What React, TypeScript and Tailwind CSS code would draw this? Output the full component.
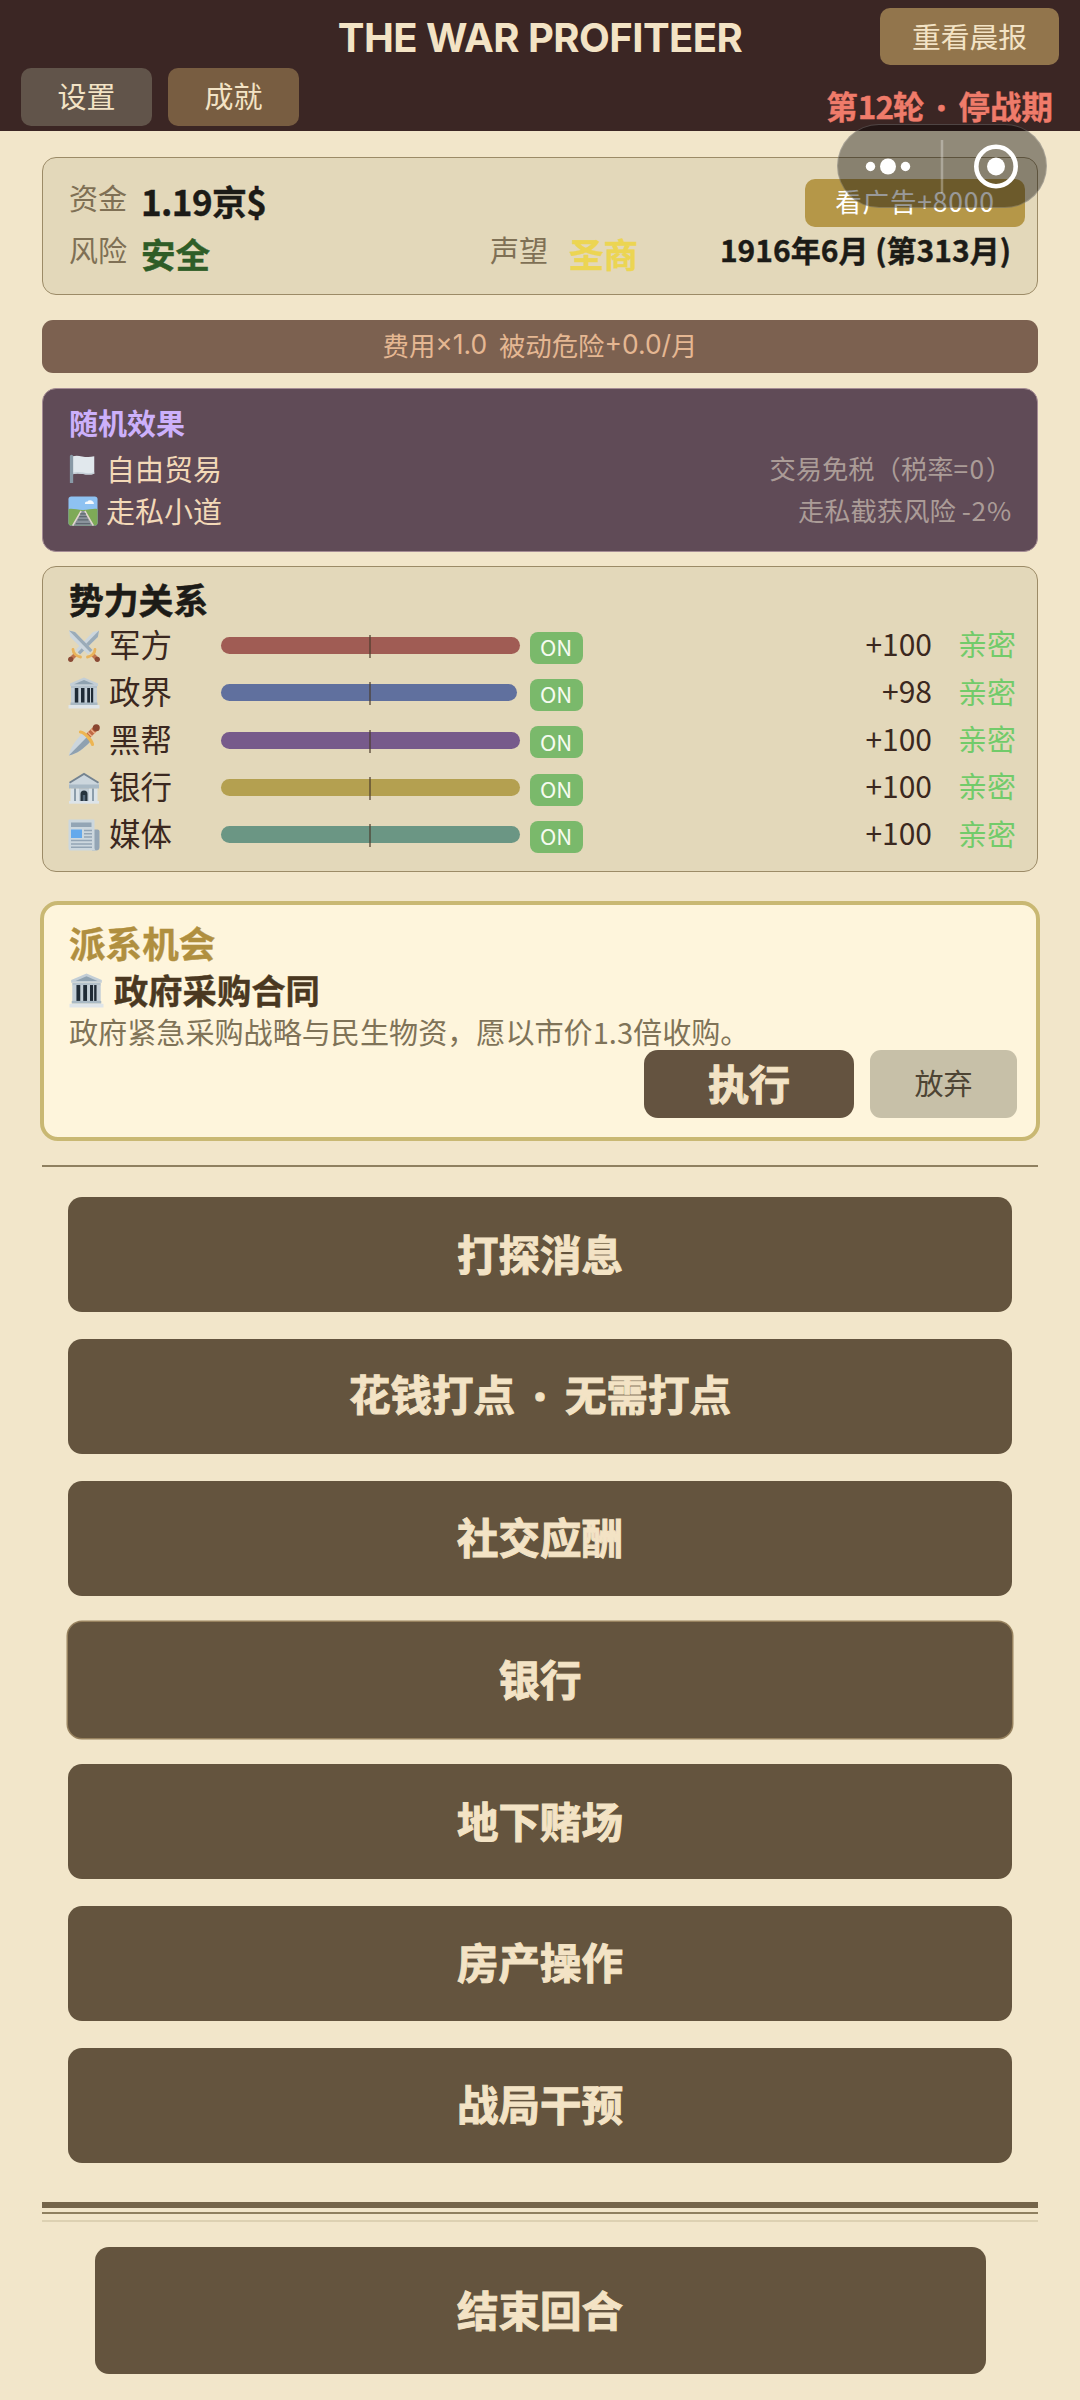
import type { ReactNode } from "react";

const CJK = "font-['Noto_Sans_CJK_SC',sans-serif]";
const HEAVY = "font-bold [-webkit-text-stroke:1px_currentColor]";

function Temple() {
  return (
    <svg viewBox="0 0 32 32" className="h-full w-full">
      <path d="M16 .5 30 6.500v2.500H2V6.500z" fill="#c3ced6" />
      <path d="M16 3 26 7.300H6z" fill="#8fa2b0" />
      <path d="M3 9h26v2.500H3z" fill="#b3c1cb" />
      <path d="M4 11h24v15H4z" fill="#1f2b36" />
      <path d="M3 11h3.800v15H3zM10.300 11h2.700v15h-2.700zM16.500 11h2.700v15h-2.700zM22 11h1v15h-1zM25.200 11H29v15h-3.800z" fill="#c3ced6" />
      <path d="M2.500 25.500h27V28h-27z" fill="#a9b9c4" />
      <path d="M.5 28h31v3.500H.5z" fill="#dfe5e9" />
    </svg>
  );
}

function Bank() {
  return (
    <svg viewBox="0 0 32 32" className="h-full w-full">
      <path d="M16 1 31 10.500v2.500H1v-2.500z" fill="#ccd6dd" />
      <path d="M16 .8 31 10 30 11.500 16 3 2 11.500 1 10z" fill="#75838f" />
      <path d="M1 12.500h30v4H1z" fill="#a9b9c5" />
      <path d="M3 16.500h26V29H3z" fill="#8c9dab" />
      <path d="M2.500 16.500H6V29H2.500zM8 16.500h3V29H8zM21 16.500h3V29h-3zM26 16.500h3.500V29H26z" fill="#dbe3e8" />
      <path d="M11 16.500h10V29H11z" fill="#c0ccd5" />
      <path d="M12.500 29v-7a3.500 3.500 0 0 1 7 0v7z" fill="#26333d" />
      <path d="M14.800 29v-6h2.400v6z" fill="#56697a" />
      <path d="M1 29h30v2.700H1z" fill="#dde4e9" />
    </svg>
  );
}

function Swords() {
  return (
    <svg viewBox="0 0 32 32" className="h-full w-full">
      <path d="M31 .5 29.800 7 12 24.500 7.500 20 25 2z" fill="#ccd6dd" />
      <path d="M31 .5 29.800 7 12 24.500 9.800 22.200z" fill="#9aabb8" />
      <path d="M1 .5 2.200 7 20 24.500l4.500-4.500L7 2z" fill="#ccd6dd" />
      <path d="M1 .5 7 2 24.500 20l-2.300 2.200z" fill="#9aabb8" />
      <path d="M8 24 2.500 29.500M24 24l5.500 5.500" stroke="#c0764f" strokeWidth="4" />
      <path d="M5 19.500c0 3.500 3.500 7 7.500 7.500M27 19.500c0 3.500-3.500 7-7.500 7.500" stroke="#e9b35b" strokeWidth="2.800" fill="none" strokeLinecap="round" />
      <circle cx="2.700" cy="29.300" r="2.600" fill="#8a4a35" />
      <circle cx="29.300" cy="29.300" r="2.600" fill="#8a4a35" />
    </svg>
  );
}

function Dagger() {
  return (
    <svg viewBox="0 0 32 32" className="h-full w-full">
      <path d="M.8 31.500C2 24 7 17 14.500 9.500l8 8C16 24 9 30 .8 31.500z" fill="#ccd6dd" />
      <path d="M.8 31.500 18.500 13.500l4 4C16 24 9 30 .8 31.500z" fill="#8fa1b0" />
      <path d="M19.500 12.500 28 4" stroke="#c06a45" strokeWidth="5.500" />
      <path d="M20 8.500l4 4M23 5.500l4 4" stroke="#eeb18a" strokeWidth="1.200" />
      <path d="M12.500 8c4 .5 11 7.500 12 12.500" stroke="#edb552" strokeWidth="3.200" fill="none" strokeLinecap="round" />
      <circle cx="28.300" cy="3.800" r="3.500" fill="#8a4630" />
    </svg>
  );
}

function Newspaper() {
  return (
    <svg viewBox="0 0 32 32" className="h-full w-full">
      <path d="M25 10.500h4.500a2 2 0 0 1 2 2V28a3.500 3.500 0 0 1-3.500 3.500h-4z" fill="#93a5b5" />
      <path d="M.5 1.500a1 1 0 0 1 1-1h24a1 1 0 0 1 1 1V29a2.500 2.500 0 0 0 1.500 2.500H2.500a2 2 0 0 1-2-2z" fill="#ccd7de" />
      <path d="M3 3.500h20.500V8H3z" fill="#93a5b5" />
      <path d="M3 10.500h11v8.500H3z" fill="#64a9ec" />
      <path d="M16 11.500h8M16 14.700h8M16 18h8M3 21.500h21M3 25h21M3 28.300h21" stroke="#93a5b5" strokeWidth="1.500" />
    </svg>
  );
}

function Flag() {
  return (
    <svg viewBox="0 0 32 32" className="h-full w-full">
      <path d="M5 2.500c7-2.500 12 2.500 23 0V21c-9 3-14-2-23 .5z" fill="#e1e8ed" />
      <path d="M5 20c9-2.500 14 2.500 23-.5V21c-9 3-14-2-23 .5z" fill="#c5d0d8" />
      <path d="M2 2.500a1.500 1.500 0 0 1 3.500 0V31H2z" fill="#8899a6" />
    </svg>
  );
}

function Railway() {
  return (
    <svg viewBox="0 0 32 32" className="h-full w-full">
      <rect x=".5" y=".5" width="31" height="31" rx="3" fill="#8ec2f2" />
      <path d="M.5 14c5-1 9 1 15.500 1s11-2 15.500-1v14.500a3 3 0 0 1-3 3h-25a3 3 0 0 1-3-3z" fill="#7eaa57" />
      <path d="M14 16h4L28 31.500H4z" fill="#8a929b" />
      <path d="M14 16 5 31.500M18 16l9 15.500" stroke="#e3d6ce" strokeWidth="1.600" />
      <path d="M13 19h6M12 22h8M10.500 25.500h11M8.500 29.500h15" stroke="#5f6870" strokeWidth="1.300" />
      <path d="M18 8.500a2.400 2.400 0 0 1 2.500-2.500 4 4 0 0 1 6.500.3 2 2 0 0 1 .5 2.200z" fill="#f5f9fc" />
    </svg>
  );
}

type Faction = { name: string; icon: ReactNode; color: string; width: number; score: string };

const factions: Faction[] = [
  { name: "军方", icon: <Swords />, color: "bg-[#a05c54]", width: 100, score: "+100" },
  { name: "政界", icon: <Temple />, color: "bg-[#60709e]", width: 99, score: "+98" },
  { name: "黑帮", icon: <Dagger />, color: "bg-[#775a8b]", width: 100, score: "+100" },
  { name: "银行", icon: <Bank />, color: "bg-[#b4a050]", width: 100, score: "+100" },
  { name: "媒体", icon: <Newspaper />, color: "bg-[#6b9684]", width: 100, score: "+100" },
];

function Dot({ className }: { className: string }) {
  return <span className={`inline-block text-center font-['Inter',sans-serif] font-black ${className}`}>·</span>;
}

const actions: { id: string; label: ReactNode; outlined?: boolean }[] = [
  { id: "scout", label: "打探消息" },
  { id: "bribe", label: <span>花钱打点<Dot className="w-[50px]" />无需打点</span> },
  { id: "social", label: "社交应酬" },
  { id: "bank", label: "银行", outlined: true },
  { id: "casino", label: "地下赌场" },
  { id: "estate", label: "房产操作" },
  { id: "war", label: "战局干预" },
];

function FactionRow({ f }: { f: Faction }) {
  return (
    <div className="flex h-[47.300px] items-center">
      <div className="h-8 w-8">{f.icon}</div>
      <div className="ml-[9px] w-[111.500px] pb-[4px] text-[31.500px] text-[#3b2820]">{f.name}</div>
      <div className="relative h-[17px] w-[299px]">
        <div className={`h-full rounded-full ${f.color}`} style={{ width: `${f.width}%` }} />
        <div className="absolute -top-[2px] left-[148px] h-[23px] w-[2px] bg-[#4a3b2c]/60" />
      </div>
      <div className="mt-[4px] ml-[10px] flex h-8 w-[53px] items-center justify-center rounded-lg bg-[#7ab96b] pb-[2px] text-[22px] text-[#f6fbf0]">
        ON
      </div>
      <div className="ml-auto pb-[4px] text-[30px] text-[#3b2820]">{f.score}</div>
      <div className="mr-[21px] ml-[26px] pb-[3px] text-[29px] text-[#72cb6a]">亲密</div>
    </div>
  );
}

function Header() {
  return (
    <header className="flex h-[131px] justify-between bg-[#3b2624]">
      <div className="flex w-[300px] gap-4 pt-[68px] pl-[21px] text-[29px] text-[#f3e3c5]">
        <div className="flex h-[58px] w-[131px] items-center justify-center rounded-[10px] bg-[#61544a] pb-[2px]">设置</div>
        <div className="flex h-[58px] w-[131px] items-center justify-center rounded-[10px] bg-[#785d41] pb-[2px]">成就</div>
      </div>
      <h1 className="pt-[14px] font-['Inter',sans-serif] text-[40px] leading-[48px] font-bold tracking-[-0.550px] whitespace-nowrap text-[#f3e3c5]">
        THE WAR PROFITEER
      </h1>
      <div className="flex w-[300px] flex-col items-end pt-2 pr-[21px]">
        <div className="flex h-[58px] w-[179px] items-center justify-center rounded-[10px] bg-[#92754c] pb-[2px] text-[28.800px] text-[#f3e3c5]">
          重看晨报
        </div>
        <div className="mt-[17px] mr-[6px] text-[31.500px] leading-[46px] font-bold whitespace-nowrap text-[#ef7b6a] [-webkit-text-stroke:0.400px_currentColor]">
          第<span className="tracking-[-1px]">12</span>轮<Dot className="w-[34px]" />停战期
        </div>
      </div>
    </header>
  );
}

function Capsule() {
  return (
    <div className="absolute top-[124px] left-[837px] flex h-[84px] w-[210px] items-center rounded-full border border-white/20 bg-black/40">
      <svg viewBox="0 0 208 82" className="h-full w-full">
        <circle cx="32.500" cy="41.500" r="4.700" fill="#fff" />
        <circle cx="50" cy="41.500" r="8" fill="#fff" />
        <circle cx="67.500" cy="41.500" r="4.700" fill="#fff" />
        <path d="M104 15v53" stroke="#fff" strokeOpacity=".3" strokeWidth="2.500" />
        <circle cx="158" cy="41.500" r="19.700" fill="none" stroke="#fff" strokeWidth="4.600" />
        <circle cx="158" cy="41.500" r="9" fill="#fff" />
      </svg>
    </div>
  );
}

function StatsCard() {
  return (
    <section className="mt-[26px] flex h-[138px] rounded-[14px] border border-[#9c8b67] bg-[#e3d8ba] pl-[26px]">
      <div className="w-[421px] shrink-0">
        <div className="mt-[16px] flex h-[48px] items-center text-[29px] text-[#7f7055]">
          资金<b className="mt-[7px] ml-[14px] text-[35px] tracking-[-0.600px] text-[#1c1b17] [-webkit-text-stroke:0.400px_currentColor]">1.19京$</b>
        </div>
        <div className="mt-[4px] flex h-[48px] items-center text-[29px] text-[#7f7055]">
          风险<b className="mt-[7px] ml-[14px] text-[34.500px] text-[#2f5d27] [-webkit-text-stroke:0.400px_currentColor]">安全</b>
        </div>
      </div>
      <div className="mt-[68px] flex h-[48px] shrink-0 items-center text-[29px] text-[#7f7055]">
        声望<b className="mt-[7px] ml-[21px] text-[34.500px] text-[#ecd552] [-webkit-text-stroke:0.400px_currentColor]">圣商</b>
      </div>
      <div className="ml-auto flex flex-col items-end pt-[21px] pr-[12px]">
        <div className="flex h-12 w-[220px] items-center justify-center rounded-[10px] bg-[#b59748] pb-[4px] text-[26.500px] tracking-[0.800px] text-white">
          看广告+8000
        </div>
        <div className="-mt-[2px] mr-[14px] text-[30px] leading-[48px] font-bold whitespace-nowrap text-[#1c1b17] [-webkit-text-stroke:0.400px_currentColor]">
          1916年6月 (第313月)
        </div>
      </div>
    </section>
  );
}

function EffectsCard() {
  return (
    <section className="mt-[15px] h-[164px] rounded-[14px] border border-[#a58c94] bg-[#604b57] pr-[25px] pl-[25px]">
      <div className="mt-[13px] pl-[1px] text-[29px] leading-[40px] font-bold text-[#ccb0fb]">随机效果</div>
      <div className="mt-[6px] flex h-[42px] items-center">
        <div className="h-[30px] w-[30px]"><Flag /></div>
        <div className="ml-[8px] text-[29px] text-[#f3d9b8]">自由贸易</div>
        <div className="ml-auto pb-[3px] text-[26.300px] text-[#ab9c97]">
          交易免税（税率<span className="tracking-[1.500px]">=0</span>）
        </div>
      </div>
      <div className="flex h-[42px] items-center">
        <div className="h-[30px] w-[30px]"><Railway /></div>
        <div className="ml-[8px] text-[29px] text-[#f3d9b8]">走私小道</div>
        <div className="ml-auto pb-[3px] text-[26.300px] text-[#ab9c97]">
          走私截获风险 <span className="tracking-[0.800px]">-2%</span>
        </div>
      </div>
    </section>
  );
}

function OpportunityCard() {
  return (
    <section className="-mx-[2px] mt-[29px] h-[240px] rounded-[18px] border-4 border-[#c9b873] bg-[#fef5dc] pr-[19px] pl-[25px]">
      <div className="mt-[14px] text-[36.600px] leading-[48px] font-bold text-[#b08f3f] [-webkit-text-stroke:0.400px_currentColor]">派系机会</div>
      <div className="flex h-[46px] items-center">
        <div className="h-[35px] w-[35px]"><Temple /></div>
        <div className="ml-[10px] text-[34.300px] font-bold text-[#4a3821] [-webkit-text-stroke:0.400px_currentColor]">政府采购合同</div>
      </div>
      <div className="text-[29.100px] leading-[37px] whitespace-nowrap text-[#7f7358]">政府紧急采购战略与民生物资，愿以市价1.3倍收购。</div>
      <div className="flex justify-end gap-4 text-[29px]">
        <div className={`flex h-[68px] w-[210px] items-center justify-center rounded-[14px] bg-[#645340] pb-[3px] text-[41px] text-[#f3e3c5] ${HEAVY}`}>
          执行
        </div>
        <div className="flex h-[68px] w-[147px] items-center justify-center rounded-[11px] bg-[#c7c0a8] pb-[3px] text-[#4d4434]">放弃</div>
      </div>
    </section>
  );
}

export default function App() {
  return (
    <div className={`relative h-[2400px] w-[1080px] overflow-hidden bg-[#f2e6ca] ${CJK}`}>
      <Header />
      <main className="mx-[42px]">
        <StatsCard />
        <div className="mt-[25px] flex h-[53px] items-center justify-center rounded-[11px] bg-[#7c6150] pb-[3px] text-[26.400px] whitespace-pre text-[#e5b792]">
          费用<span className="font-['Inter',sans-serif]">×1.0</span>
          {"  被动危险"}
          <span className="font-['Inter',sans-serif]">+0.0/</span>月
        </div>
        <EffectsCard />
        <section className="mt-[14px] h-[306px] rounded-[14px] border border-[#9c8b67] bg-[#e3d8ba] pl-[25px]">
          <h2 className="mt-[9px] pl-[1px] text-[34.800px] leading-[46px] font-bold text-[#1c1b17] [-webkit-text-stroke:0.600px_currentColor]">势力关系</h2>
          {factions.map((f) => (
            <FactionRow key={f.name} f={f} />
          ))}
        </section>
        <OpportunityCard />
        <div className="mt-[24px] h-[1.500px] bg-[#8f8060]" />
        <nav className="mx-[26px] mt-[30.500px] flex flex-col gap-[26.500px]">
          {actions.map((a) => (
            <button
              key={a.id}
              className={`flex h-[115.250px] w-full items-center justify-center rounded-[14px] bg-[#64543e] pb-[4px] text-[41.500px] text-[#f3e3c5] ${HEAVY} ${
                a.outlined ? "ring-[1.500px] ring-[#97825f]" : ""
              }`}
            >
              {a.label}
            </button>
          ))}
        </nav>
        <div className="mt-[39.500px] h-[6px] bg-[#75654a]" />
        <div className="mt-[4px] h-[2px] bg-[#8f8060]" />
        <div className="mt-[6px] h-[2px] bg-[#ddd1b2]" />
        <button className={`mx-auto mt-[25px] flex h-[127px] w-[891px] items-center justify-center rounded-[14px] bg-[#64543e] pb-[4px] text-[41.500px] text-[#f3e3c5] ${HEAVY}`}>
          结束回合
        </button>
      </main>
      <Capsule />
    </div>
  );
}
